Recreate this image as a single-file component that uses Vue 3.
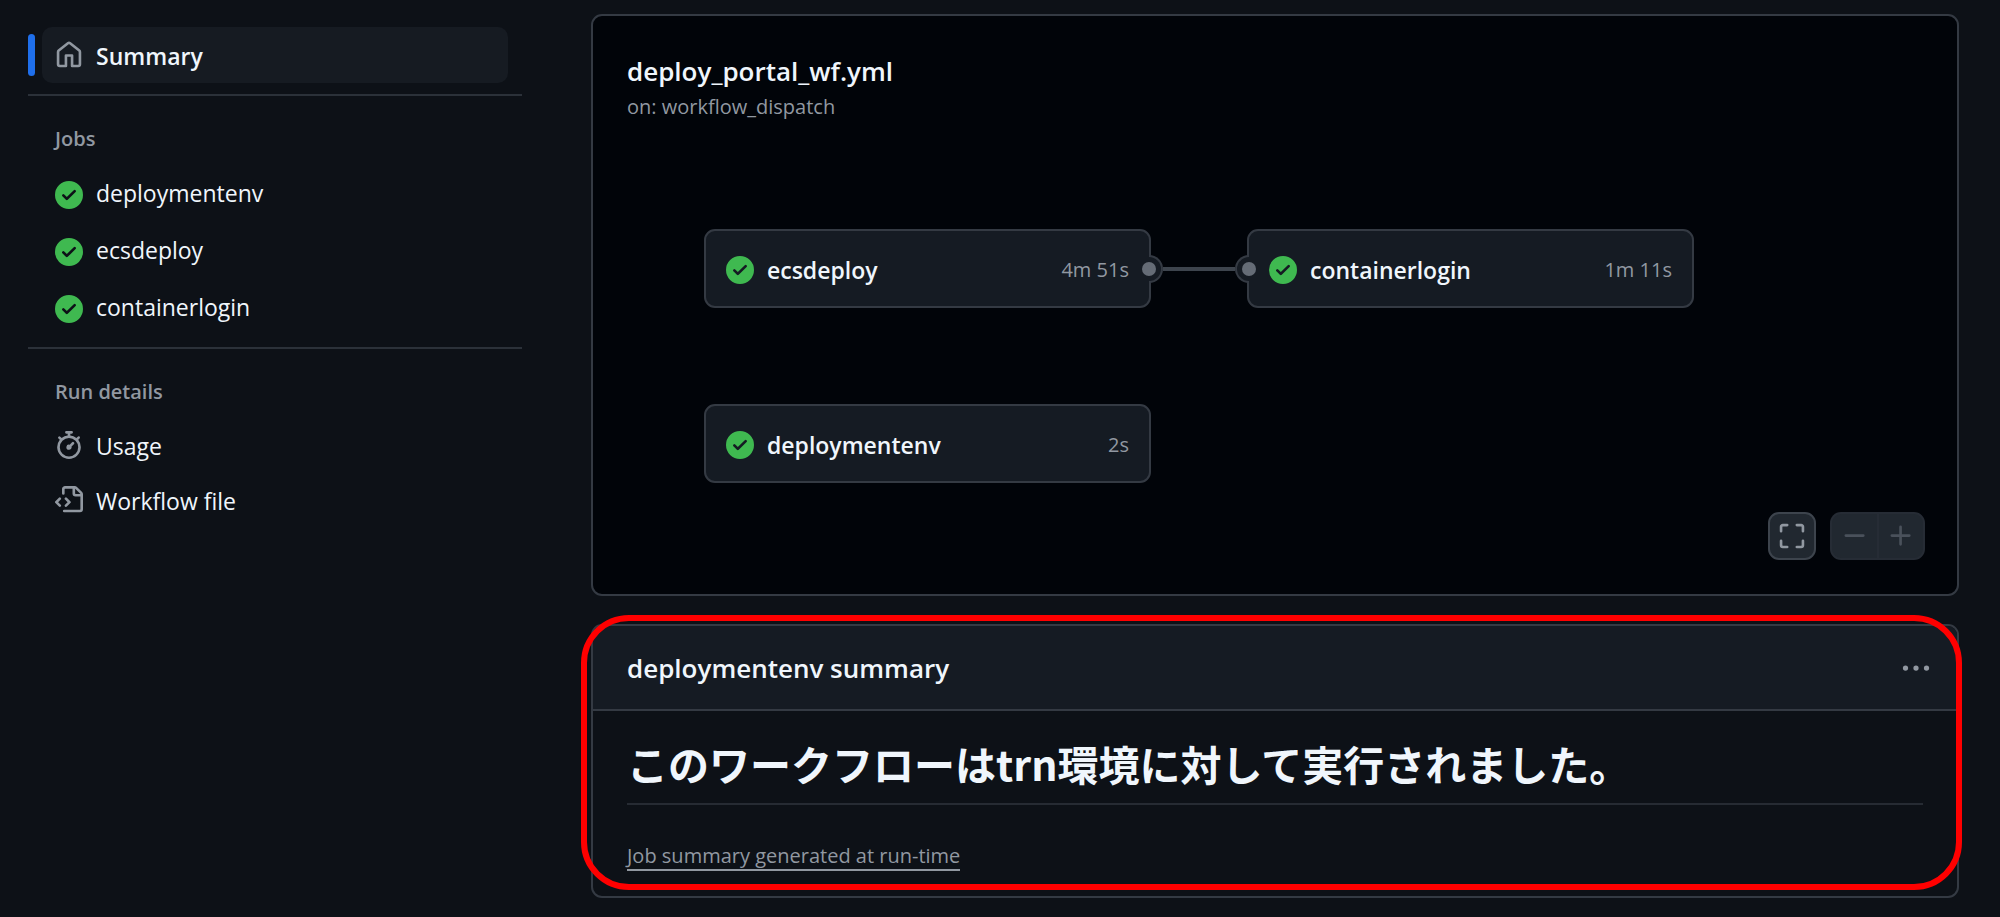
<template>
  <div class="page">
    <aside class="sidebar">
      <nav aria-label="Workflow run">
        <a href="#summary" class="nav-item current" aria-current="page">
          <svg class="icon" viewBox="0 0 16 16" aria-hidden="true"><path :d="icons.home" /></svg>
          <span class="nav-text">Summary</span>
        </a>

        <section class="group">
          <h2 class="group-title">Jobs</h2>
          <ul class="list job-list">
            <li v-for="job in jobs" :key="job">
              <a :href="'#' + job" class="nav-item job-item">
                <svg class="icon success" viewBox="0 0 16 16" aria-hidden="true"><path :d="icons.check" /></svg>
                <span class="job-text">{{ job }}</span>
              </a>
            </li>
          </ul>
        </section>

        <section class="group">
          <h2 class="group-title">Run details</h2>
          <ul class="list">
            <li v-for="item in details" :key="item.label">
              <a :href="item.href" class="nav-item">
                <svg class="icon" viewBox="0 0 16 16" aria-hidden="true"><path :d="icons[item.icon]" /></svg>
                <span class="nav-text">{{ item.label }}</span>
              </a>
            </li>
          </ul>
        </section>
      </nav>
    </aside>

    <main class="content">
      <section class="card graph">
        <h2 class="card-title">deploy_portal_wf.yml</h2>
        <p class="trigger">on: workflow_dispatch</p>

        <div class="stages">
          <div v-for="(stage, i) in stages" :key="i" class="stage">
            <a v-for="node in stage" :key="node.name" :href="'#' + node.name" class="node">
              <svg class="icon success" viewBox="0 0 16 16" aria-hidden="true"><path :d="icons.check" /></svg>
              <span class="node-name">{{ node.name }}</span>
              <span class="node-time">{{ node.time }}</span>
              <span v-if="node.port" class="port" :class="node.port"></span>
            </a>
          </div>
        </div>

        <div class="controls">
          <button type="button" class="control" aria-label="Full screen">
            <svg class="icon" viewBox="0 0 16 16"><path :d="icons.full" /></svg>
          </button>
          <div class="zoom">
            <button type="button" class="control" aria-label="Zoom out" disabled>
              <svg class="icon" viewBox="0 0 16 16"><path :d="icons.dash" /></svg>
            </button>
            <button type="button" class="control" aria-label="Zoom in" disabled>
              <svg class="icon" viewBox="0 0 16 16"><path :d="icons.plus" /></svg>
            </button>
          </div>
        </div>
      </section>

      <section class="card summary">
        <header class="summary-header">
          <h2 class="card-title">deploymentenv summary</h2>
          <button type="button" class="more" aria-label="More options">
            <svg class="icon" viewBox="0 0 16 16">
              <circle cx="2" cy="8" r="1.5" />
              <circle cx="8" cy="8" r="1.5" />
              <circle cx="14" cy="8" r="1.5" />
            </svg>
          </button>
        </header>
        <div class="summary-body">
          <h1 class="message" lang="ja">このワークフローはtrn環境に対して実行されました。</h1>
          <a href="#job-summary" class="generated">Job summary generated at run-time</a>
        </div>
        <div class="highlight"></div>
      </section>
    </main>
  </div>
</template>

<script setup>
const jobs = ['deploymentenv', 'ecsdeploy', 'containerlogin']

const details = [
  { label: 'Usage', icon: 'stopwatch', href: '#usage' },
  { label: 'Workflow file', icon: 'file', href: '#workflow' }
]

const stages = [
  [
    { name: 'ecsdeploy', time: '4m 51s', port: 'out' },
    { name: 'deploymentenv', time: '2s' }
  ],
  [{ name: 'containerlogin', time: '1m 11s', port: 'in' }]
]

const icons = {
  home: 'M6.906.664a1.749 1.749 0 0 1 2.187 0l5.25 4.2c.415.332.657.835.657 1.367v7.019A1.75 1.75 0 0 1 13.25 15h-3.5a.75.75 0 0 1-.75-.75V9H7v5.25a.75.75 0 0 1-.75.75h-3.5A1.75 1.75 0 0 1 1 13.25V6.23c0-.531.242-1.034.657-1.366l5.25-4.2Zm1.25 1.171a.25.25 0 0 0-.312 0l-5.25 4.2a.25.25 0 0 0-.094.196v7.019c0 .138.112.25.25.25H5.5V8.25a.75.75 0 0 1 .75-.75h3.5a.75.75 0 0 1 .75.75v5.25h2.75a.25.25 0 0 0 .25-.25V6.23a.25.25 0 0 0-.094-.195Z',
  check: 'M8 16A8 8 0 1 1 8 0a8 8 0 0 1 0 16Zm3.78-9.72a.751.751 0 0 0-.018-1.042.751.751 0 0 0-1.042-.018L6.75 9.19 5.28 7.72a.751.751 0 0 0-1.042.018.751.751 0 0 0-.018 1.042l2 2a.75.75 0 0 0 1.06 0Z',
  stopwatch: 'M5.75.75A.75.75 0 0 1 6.5 0h3a.75.75 0 0 1 0 1.5h-.75v1l-.001.041a6.724 6.724 0 0 1 3.464 1.435l.007-.006.75-.75a.749.749 0 0 1 1.275.326.749.749 0 0 1-.215.734l-.75.75-.006.007a6.75 6.75 0 1 1-10.548 0L2.72 5.03l-.75-.75a.751.751 0 0 1 .018-1.042.751.751 0 0 1 1.042-.018l.75.75.007.006A6.72 6.72 0 0 1 7.25 2.541V1.5H6.5a.75.75 0 0 1-.75-.75ZM8 14.5a5.25 5.25 0 1 0-.001-10.501A5.25 5.25 0 0 0 8 14.5Zm.389-6.7 1.33-1.33a.75.75 0 1 1 1.061 1.06L9.45 8.861A1.503 1.503 0 0 1 8 10.75a1.499 1.499 0 1 1 .389-2.95Z',
  file: 'M4 1.75C4 .784 4.784 0 5.75 0h5.586c.464 0 .909.184 1.237.513l2.914 2.914c.329.328.513.773.513 1.237v8.586A1.75 1.75 0 0 1 14.25 15h-9a.75.75 0 0 1 0-1.5h9a.25.25 0 0 0 .25-.25V6h-2.75A1.75 1.75 0 0 1 10 4.25V1.5H5.75a.25.25 0 0 0-.25.25v2.5a.75.75 0 0 1-1.5 0Zm1.72 4.97a.75.75 0 0 1 1.06 0l2 2a.75.75 0 0 1 0 1.06l-2 2a.749.749 0 0 1-1.275-.326.749.749 0 0 1 .215-.734l1.47-1.47-1.47-1.47a.75.75 0 0 1 0-1.06ZM3.28 7.78 1.81 9.25l1.47 1.47a.751.751 0 0 1-.018 1.042.751.751 0 0 1-1.042.018l-2-2a.75.75 0 0 1 0-1.06l2-2a.751.751 0 0 1 1.042.018.751.751 0 0 1 .018 1.042Zm8.22-6.218V4.25c0 .138.112.25.25.25h2.688l-.011-.013-2.914-2.914-.013-.011Z',
  full: 'M1.75 10a.75.75 0 0 1 .75.75v2.5c0 .138.112.25.25.25h2.5a.75.75 0 0 1 0 1.5h-2.5A1.75 1.75 0 0 1 1 13.25v-2.5a.75.75 0 0 1 .75-.75Zm12.5 0a.75.75 0 0 1 .75.75v2.5A1.75 1.75 0 0 1 13.25 15h-2.5a.75.75 0 0 1 0-1.5h2.5a.25.25 0 0 0 .25-.25v-2.5a.75.75 0 0 1 .75-.75ZM2.75 2.5a.25.25 0 0 0-.25.25v2.5a.75.75 0 0 1-1.5 0v-2.5C1 1.784 1.784 1 2.75 1h2.5a.75.75 0 0 1 0 1.5ZM10 1.75a.75.75 0 0 1 .75-.75h2.5c.966 0 1.75.784 1.75 1.75v2.5a.75.75 0 0 1-1.5 0v-2.5a.25.25 0 0 0-.25-.25h-2.5a.75.75 0 0 1-.75-.75Z',
  dash: 'M2 7.75A.75.75 0 0 1 2.75 7h10a.75.75 0 0 1 0 1.5h-10A.75.75 0 0 1 2 7.75Z',
  plus: 'M7.75 2a.75.75 0 0 1 .75.75V7h4.25a.75.75 0 0 1 0 1.5H8.5v4.25a.75.75 0 0 1-1.5 0V8.5H2.75a.75.75 0 0 1 0-1.5H7V2.75A.75.75 0 0 1 7.75 2Z'
}
</script>

<style>
body {
  background: #0d1117;
}
</style>

<style scoped>
.page {
  display: flex;
  box-sizing: border-box;
  padding: 14px 41px 20px 28px;
  gap: 69px;
  font-family: "Open Sans", "Noto Sans", "Noto Sans CJK JP", sans-serif;
  font-size: 23px;
  color: #f0f6fc;
}

.page * {
  box-sizing: border-box;
}

a {
  color: inherit;
  text-decoration: none;
}

h1,
h2,
p,
ul {
  margin: 0;
  padding: 0;
}

.icon {
  display: block;
  flex: none;
  width: 28px;
  height: 28px;
  fill: #9198a1;
}

.success {
  fill: #3fb950;
}

/* sidebar */
.sidebar {
  flex: none;
  width: 494px;
  padding-top: 13px;
}

.nav-item {
  display: flex;
  align-items: center;
  gap: 13px;
  height: 55px;
  margin: 0 14px;
  padding: 0 13px;
  border-radius: 10px;
}

.nav-text {
  padding-top: 2px;
}

.current {
  position: relative;
  height: 56px;
  margin-bottom: 11px;
  background: #161b22;
  font-weight: 600;
}

.current::before {
  content: "";
  position: absolute;
  top: 7px;
  bottom: 7px;
  left: -14px;
  width: 7px;
  border-radius: 4px;
  background: #1f6feb;
}

.group {
  border-top: 2px solid #2b3139;
  padding: 27px 0 10px;
}

.group-title {
  padding: 0 27px;
  margin-bottom: 9px;
  font-size: 20px;
  line-height: 32px;
  font-weight: 600;
  color: #9198a1;
}

.list {
  list-style: none;
}

.job-list {
  padding-top: 2px;
}

.job-item {
  height: 57px;
}

.job-text {
  padding-bottom: 3px;
}

/* cards */
.content {
  flex: 1;
  min-width: 0;
  display: flex;
  flex-direction: column;
  gap: 28px;
}

.card {
  border: 2px solid #343a43;
  border-radius: 11px;
}

.card-title {
  font-size: 26px;
  line-height: 42px;
  font-weight: 600;
}

.graph {
  padding: 34px 32px 34px 34px;
  background: #010409;
}

.trigger {
  font-size: 20px;
  line-height: 30px;
  color: #9198a1;
}

.stages {
  display: flex;
  gap: 96px;
  padding: 107px 0 29px 77px;
}

.stage {
  display: flex;
  flex-direction: column;
  gap: 96px;
  width: 447px;
}

.node {
  position: relative;
  display: flex;
  align-items: center;
  gap: 13px;
  height: 79px;
  padding: 2px 20px 0;
  border: 2px solid #343a43;
  border-radius: 11px;
  background: #151b23;
}

.node-name {
  flex: 1;
  font-weight: 600;
}

.node-time {
  font-size: 20px;
  color: #9198a1;
}

/* connection points; the outer half carries the ring */
.port {
  position: absolute;
  top: 24px;
  width: 14px;
  height: 28px;
  border: 2px solid #343a43;
  background: #151b23;
}

.port::before {
  content: "";
  position: absolute;
  top: 5px;
  width: 14px;
  height: 14px;
  border-radius: 50%;
  background: #656c76;
}

.port.out {
  right: -14px;
  border-left: 0;
  border-radius: 0 14px 14px 0;
}

.port.out::before {
  left: -7px;
}

.port.out::after {
  content: "";
  position: absolute;
  top: 10px;
  left: 14px;
  width: 72px;
  height: 4px;
  background: #3d444d;
}

.port.in {
  left: -14px;
  border-right: 0;
  border-radius: 14px 0 0 14px;
}

.port.in::before {
  right: -7px;
}

.controls {
  display: flex;
  justify-content: flex-end;
  gap: 14px;
}

.control {
  display: flex;
  align-items: center;
  justify-content: center;
  width: 48px;
  height: 48px;
  padding: 0;
  border: 2px solid #3d444d;
  border-radius: 11px;
  background: #212830;
}

.zoom {
  display: flex;
}

.zoom .control {
  border-color: #262c35;
}

.zoom .control:first-child {
  width: 47px;
  border-right: 0;
  border-radius: 11px 0 0 11px;
}

.zoom .control:last-child {
  border-radius: 0 11px 11px 0;
}

.zoom .icon {
  fill: #4a515b;
}

.summary {
  position: relative;
}

.summary-header {
  display: flex;
  align-items: center;
  justify-content: space-between;
  height: 85px;
  padding: 0 27px 0 34px;
  border-bottom: 2px solid #343a43;
  border-radius: 9px 9px 0 0;
  background: #151b23;
}

.more {
  padding: 0;
  border: 0;
  background: none;
}

.summary-body {
  padding: 26px 34px 25px;
}

.message {
  margin-bottom: 33px;
  padding-bottom: 14px;
  border-bottom: 2px solid #262b33;
  font-family: "Noto Sans CJK JP", sans-serif;
  font-size: 41px;
  line-height: 52px;
  font-weight: 700;
}

.generated {
  display: inline-block;
  border-bottom: 2px solid #9198a1;
  font-size: 20px;
  line-height: 26px;
  color: #9198a1;
}

/* red marker drawn round the card */
.highlight {
  position: absolute;
  inset: -11px -5px 6px -12px;
  border: 6px solid #ff0000;
  border-radius: 48px;
  pointer-events: none;
}
</style>
